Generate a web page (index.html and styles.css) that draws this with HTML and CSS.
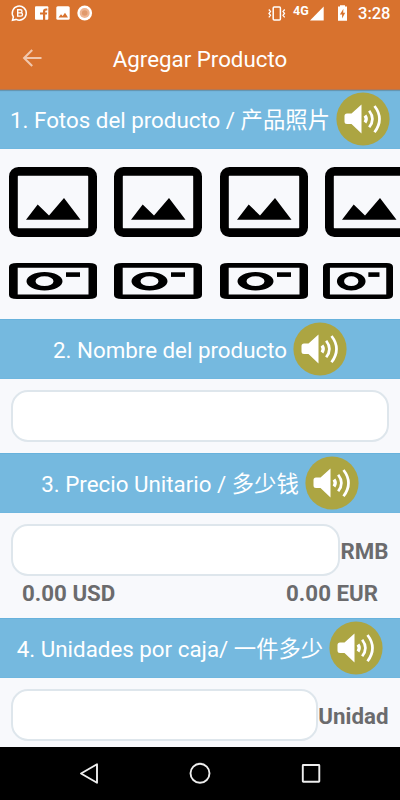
FILE: index.html
```
<!DOCTYPE html>
<html lang="es">
<head>
<meta charset="utf-8">
<title>Agregar Producto</title>
<link rel="stylesheet" href="styles.css">
</head>
<body>
<svg class="defs" width="0" height="0" aria-hidden="true">
  <symbol id="speaker" viewBox="0 0 54 54">
    <circle cx="27" cy="27" r="26.6" fill="#aca542"/>
    <path d="M11 21.500Q8.500 21.500 8.500 24V29.500Q8.500 32 11 32H15.500L25.500 41.500V12.500L15.500 21.500Z" fill="#fff"/>
    <g fill="none" stroke="#fff" stroke-width="2.700">
      <path d="M29 23.500Q31.500 27 29 30.500" stroke-width="3.200"/>
      <path d="M33.200 18.700Q39.600 27 33.200 35.300"/>
      <path d="M38.500 14Q48.500 27 38.500 40.300"/>
    </g>
  </symbol>
  <symbol id="photo" viewBox="0 0 88 70">
    <rect x="4.400" y="4.400" width="79.200" height="61.200" rx="5" fill="none" stroke="#000" stroke-width="8.800"/>
    <path d="M17 52.700L28.700 37.500L40 48.500L55 31L71.500 52.700Z"/>
  </symbol>
  <symbol id="camera" viewBox="0 0 88 36" preserveAspectRatio="none">
    <path fill-rule="evenodd" d="M8 0H80Q88 0 88 4V32Q88 36 80 36H8Q0 36 0 32V4Q0 0 8 0ZM8.700 4.700V31.500H79.500V4.700Z"/>
    <path fill-rule="evenodd" d="M17.500 18.200A18 9.200 0 0 1 53.500 18.200A18 9.200 0 0 1 17.500 18.200ZM26.500 18.200A9 4.900 0 0 0 44.500 18.200A9 4.900 0 0 0 26.500 18.200Z"/>
    <rect x="57" y="9.300" width="14" height="4.600"/>
  </symbol>
</svg>
<div class="screen">
  <header class="top">
    <div class="status">
      <svg class="notices" viewBox="0 0 100 26">
        <path d="M12.500 20.300L13.400 16.900A7 7 0 1 1 16.200 19.400Z" fill="none" stroke="#fff" stroke-width="1.500"/>
        <path d="M17.700 9.800H20.500Q22 9.800 22 11.300Q22 12.900 20.500 12.900H17.700ZM17.700 12.900H20.900Q22.500 12.900 22.500 14.500Q22.500 16.100 20.900 16.100H17.700Z" fill="none" stroke="#fff" stroke-width="1.400"/>
        <rect x="35" y="6.300" width="13.300" height="13.500" rx="1" fill="#fff"/>
        <path d="M43 20V14.600H40V12.600H43V11.200Q43 8.600 46 8.600H47.300V10.600H46.200Q45.200 10.600 45.200 11.600V12.600H47.200L46.900 14.600H45.200V20Z" fill="#d8722e"/>
        <rect x="56.300" y="6.300" width="13.400" height="13.500" rx="1.500" fill="#fff"/>
        <path d="M58.500 17.500L61 14.200L62.700 16L65 12.800L68 17.500Z" fill="#d8722e"/>
        <circle cx="84.700" cy="13" r="7.400" fill="#fff"/>
        <circle cx="84.700" cy="13" r="5" fill="#efb591"/>
        <circle cx="84.700" cy="13" r="2.800" fill="#e19a6c"/>
      </svg>
      <svg class="vibrate" viewBox="0 0 18 26">
        <rect x="5.200" y="6.900" width="7.200" height="13" rx="1" fill="none" stroke="#fff" stroke-width="1.500"/>
        <path d="M.8 9.500L2.500 11.500L1 13.400L2.500 15.300L.8 17.300M16.700 9.500L15 11.500L16.500 13.400L15 15.300L16.700 17.300" fill="none" stroke="#fff" stroke-width="1.300"/>
      </svg>
      <span class="network">4G</span>
      <svg class="signal" viewBox="0 0 34 26">
        <path d="M0 20.500L13.700 6.500V20.500Z" fill="#fff"/>
        <path d="M28 6.500H30V5.200H35V6.500H37V20.800H28Z" fill="#fff"/>
        <path d="M33.400 8.700L29.900 14.400H32.100V18.600L35.200 12.700H33.200Z" fill="#d8722e"/>
      </svg>
      <span class="clock">3:28</span>
    </div>
    <div class="toolbar">
      <svg class="back" viewBox="0 0 20 20"><path d="M19.500 10H2.200M10.200 1.900L2.100 10L10.200 18.100" fill="none" stroke="#f1c7ad" stroke-width="2.100"/></svg>
      <h1>Agregar Producto</h1>
    </div>
  </header>
  <main>
    <h2 class="band first"><span>1. Fotos del producto / 产品照片</span><svg class="speaker"><use href="#speaker"/></svg></h2>
    <section class="gallery">
      <div class="photos">
        <svg><use href="#photo"/></svg><svg><use href="#photo"/></svg><svg><use href="#photo"/></svg><svg><use href="#photo"/></svg>
      </div>
      <div class="cameras">
        <svg><use href="#camera"/></svg><svg><use href="#camera"/></svg><svg><use href="#camera"/></svg><svg class="narrow"><use href="#camera"/></svg>
      </div>
    </section>
    <h2 class="band"><span>2. Nombre del producto</span><svg class="speaker"><use href="#speaker"/></svg></h2>
    <section class="field name"><input aria-label="Nombre"></section>
    <h2 class="band"><span>3. Precio Unitario / 多少钱</span><svg class="speaker"><use href="#speaker"/></svg></h2>
    <section class="price">
      <div class="field"><input aria-label="Precio"><span>RMB</span></div>
      <div class="rates"><span>0.00 USD</span><span>0.00 EUR</span></div>
    </section>
    <h2 class="band"><span>4. Unidades por caja/ 一件多少</span><svg class="speaker"><use href="#speaker"/></svg></h2>
    <section class="field"><input aria-label="Unidades"><span>Unidad</span></section>
  </main>
  <nav class="nav">
    <svg viewBox="0 0 400 53" fill="none" stroke="#eee" stroke-width="1.900">
      <path d="M97 17.200V35.800L81 26.500Z" stroke-linejoin="round"/>
      <circle cx="200" cy="26.300" r="9.500"/>
      <rect x="302.800" y="18" width="16.500" height="16.800" rx=".5"/>
    </svg>
  </nav>
</div>
</body>
</html>
```
FILE: styles.css
```
* { box-sizing: border-box; }
body { margin: 0; font-family: Roboto, "Noto Sans CJK SC", sans-serif; }
.defs { display: none; }
.screen { width: 400px; height: 800px; display: flex; flex-direction: column; overflow: hidden; background: #f8f9fc; }
svg { display: block; flex: none; }

.top { flex: none; height: 89px; background: #d8722e; color: #fff; }
.status { height: 26px; display: flex; }
.notices { width: 100px; height: 26px; margin-right: 168px; }
.vibrate { width: 18px; height: 26px; }
.network { width: 24px; padding-left: 7px; font-size: 12.5px; font-weight: 700; line-height: 22px; }
.signal { width: 34px; height: 26px; overflow: visible; }
.clock { padding-left: 14px; font-size: 16.5px; font-weight: 500; line-height: 28px; }
.toolbar { height: 63px; display: flex; align-items: center; justify-content: center; padding-top: 2px; }
.back { width: 20px; height: 20px; margin: -2px 71px 0 -91px; }
h1 { margin: 0; font-size: 22.3px; font-weight: 400; line-height: 28px; white-space: nowrap; }

main { flex: 1; min-height: 0; overflow: hidden; }
.band { display: flex; align-items: center; justify-content: center; gap: 6px; height: 60px; margin: 0; background: #75b9df; color: #fff; font-size: 22.35px; font-weight: 400; line-height: 30px; white-space: nowrap; border-top: 1px solid #68b2dc; border-bottom: 1px solid #70b7df; }
.band span { padding-top: 2px; }
.band.first { box-shadow: inset 0 2px 1px -1px #6493ac; border-top-color: #b57752; }
.speaker { width: 54px; height: 54px; }

.gallery { height: 170px; padding: 17.500px 0 0 9px; overflow: hidden; }
.photos, .cameras { display: flex; gap: 17.400px; }
.photos svg { width: 88px; height: 70px; }
.cameras { margin-top: 26.500px; }
.cameras svg { width: 88px; height: 36px; }
.cameras .narrow { width: 70px; margin-left: -2px; }

.field { display: flex; align-items: center; padding: 11px 11.500px 0 11px; color: #6b6b6d; }
.field.name { height: 74px; align-items: flex-start; }
input { flex: 1; min-width: 0; height: 52px; padding: 0 16px; border: 2px solid #dee6ec; border-radius: 17px; background: #fff; font: 22px Roboto, sans-serif; outline: 0; }
.field span, .rates { font-size: 22.3px; font-weight: 700; line-height: 28px; }
.field span { padding-top: 2px; }
.price { height: 105px; }
.rates { display: flex; justify-content: space-between; padding: 3px 22px 0; color: #6b6b6d; }

.nav { flex: none; height: 53px; background: #000; }
.nav svg { width: 400px; height: 53px; }
```
